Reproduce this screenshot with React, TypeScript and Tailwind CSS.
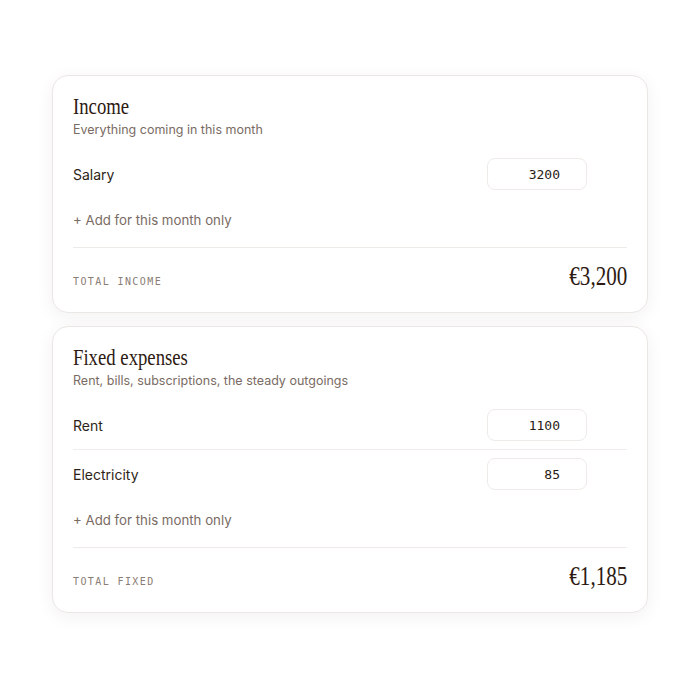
import React from 'react';

const serif = "font-['Liberation_Serif','DejaVu_Serif',serif]";
const sans = "font-['Inter','Noto_Sans',sans-serif]";
const mono = "font-['DejaVu_Sans_Mono','Liberation_Mono',monospace]";

type Item = { label: string; amount: number };

const Row: React.FC<{ item: Item; last: boolean }> = ({ item, last }) => (
  <div className={`flex items-center py-2 ${last ? '' : 'border-b border-[#f1edea]'}`}>
    <span className={`flex-1 text-[14px] text-[#2e1f18] ${sans}`}>{item.label}</span>
    <input
      readOnly
      value={item.amount}
      className={`w-[100px] h-[32px] rounded-lg border border-[#efebe8] bg-white pr-[26px] text-right text-[13px] font-medium text-[#2a1b14] outline-none ${mono}`}
    />
    <div className="w-10" />
  </div>
);

const Section: React.FC<{
  title: string;
  subtitle: string;
  items: Item[];
  totalLabel: string;
  total: string;
}> = ({ title, subtitle, items, totalLabel, total }) => (
  <section className="rounded-2xl border border-[#ebe7e4] bg-white px-5 pt-[18px] pb-5 shadow-[0_4px_18px_rgba(60,40,30,0.06)]">
    <h2 className={`origin-left scale-x-[0.78] text-[24px] leading-[24px] text-[#2e1a12] ${serif}`}>{title}</h2>
    <p className={`mt-[3px] text-[12.5px] leading-[18px] text-[#7a6b63] ${sans}`}>{subtitle}</p>

    <div className="mt-[11px]">
      {items.map((it, i) => (
        <Row key={it.label} item={it} last={i === items.length - 1} />
      ))}
    </div>

    <button className={`mt-[12px] block h-5 text-[13.25px] leading-5 text-[#7a6b63] ${sans}`}>
      + Add for this month only
    </button>

    <div className="mt-[17px] flex h-[45px] items-center justify-between border-t border-[#eeeae7] pt-3">
      <span className={`mt-[10px] text-[10px] tracking-[0.14em] text-[#8b7d74] ${mono}`}>{totalLabel}</span>
      <span className={`origin-right scale-x-[0.78] text-[27px] leading-8 text-[#2e1a12] ${serif}`}>{total}</span>
    </div>
  </section>
);

export default function App() {
  return (
    <div className="min-h-[700px] bg-white pt-[75px]">
      <div className="mx-auto flex w-[596px] flex-col gap-[13px]">
        <Section
          title="Income"
          subtitle="Everything coming in this month"
          items={[{ label: 'Salary', amount: 3200 }]}
          totalLabel="TOTAL INCOME"
          total="€3,200"
        />
        <Section
          title="Fixed expenses"
          subtitle="Rent, bills, subscriptions, the steady outgoings"
          items={[
            { label: 'Rent', amount: 1100 },
            { label: 'Electricity', amount: 85 },
          ]}
          totalLabel="TOTAL FIXED"
          total="€1,185"
        />
      </div>
    </div>
  );
}
